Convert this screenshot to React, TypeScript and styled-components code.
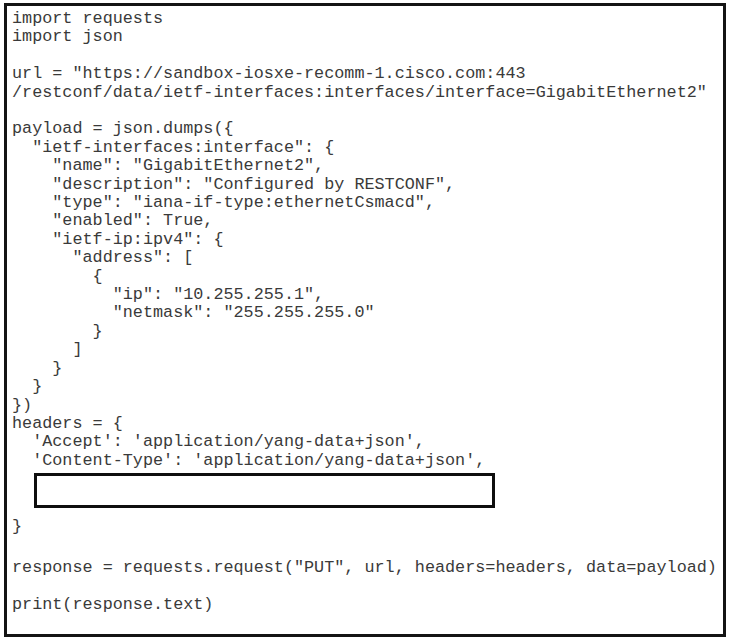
import React from "react";
import styled, { createGlobalStyle } from "styled-components";

const Global = createGlobalStyle`
  html, body { margin: 0; padding: 0; background: #ffffff; }
`;

const Frame = styled.div`
  box-sizing: border-box;
  margin: 3px 0 0 4px;
  width: 722px;
  height: 634px;
  border: 3px solid #141414;
  padding: 4px 0 0 5px;
  background: #fff;
`;

const Code = styled.pre`
  margin: 0;
  font-family: "Liberation Mono", "Courier New", monospace;
  font-size: 16.8px;
  line-height: 18.4px;
  color: #3a3a3a;
  white-space: pre;
`;

const Line = styled.div<{ $gap?: number }>`
  min-height: 18.4px;
  margin-top: ${(p) => p.$gap ?? 0}px;
`;

const AnswerBox = styled.div`
  box-sizing: border-box;
  margin: 3px 0 0 22px;
  width: 461px;
  height: 35px;
  border: 3px solid #0e0e0e;
`;

const top = [
  "import requests",
  "import json",
  "",
  'url = "https://sandbox-iosxe-recomm-1.cisco.com:443',
  '/restconf/data/ietf-interfaces:interfaces/interface=GigabitEthernet2"',
  "",
  "payload = json.dumps({",
  '  "ietf-interfaces:interface": {',
  '    "name": "GigabitEthernet2",',
  '    "description": "Configured by RESTCONF",',
  '    "type": "iana-if-type:ethernetCsmacd",',
  '    "enabled": True,',
  '    "ietf-ip:ipv4": {',
  '      "address": [',
  "        {",
  '          "ip": "10.255.255.1",',
  '          "netmask": "255.255.255.0"',
  "        }",
  "      ]",
  "    }",
  "  }",
  "})",
  "headers = {",
  "  'Accept': 'application/yang-data+json',",
  "  'Content-Type': 'application/yang-data+json',",
];

export default function App() {
  return (
    <>
      <Global />
      <Frame>
        <Code>
          {top.map((t, i) => (
            <Line key={i}>{t}</Line>
          ))}
          <AnswerBox />
          <Line $gap={10}>{"}"}</Line>
          <Line $gap={22}>
            {'response = requests.request("PUT", url, headers=headers, data=payload)'}
          </Line>
          <Line $gap={19}>{"print(response.text)"}</Line>
        </Code>
      </Frame>
    </>
  );
}
